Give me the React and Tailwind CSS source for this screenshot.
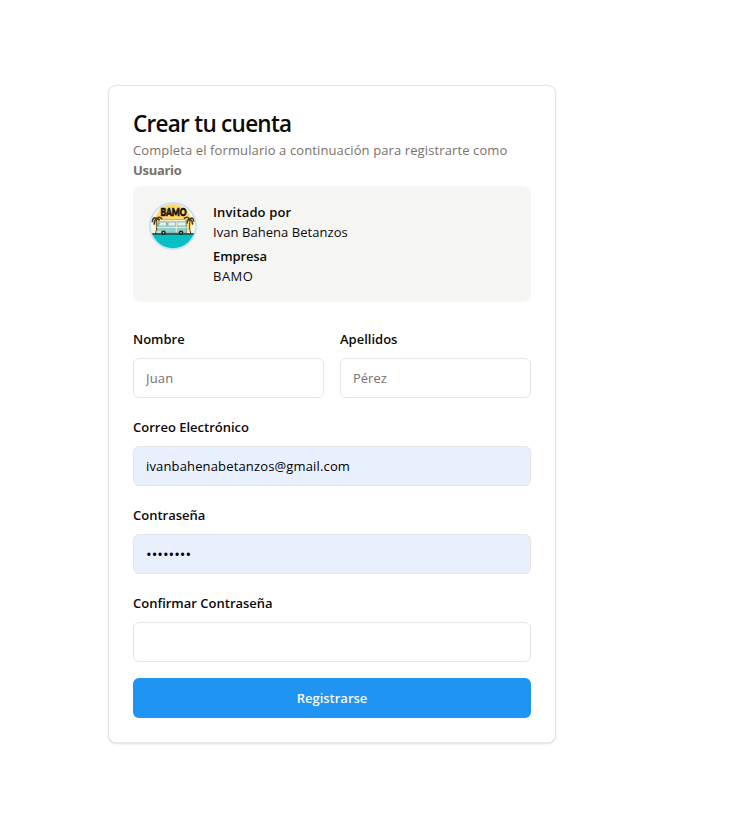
import React from 'react';

function Avatar() {
  return (
    <svg viewBox="0 0 48 48" className="size-12 shrink-0" role="img" aria-label="BAMO">
      <defs>
        <clipPath id="disc">
          <circle cx="24" cy="24" r="22.2" />
        </clipPath>
      </defs>
      <circle cx="24" cy="24" r="24" fill="#c5e2fb" />
      <g clipPath="url(#disc)">
        <rect width="48" height="48" fill="#fdf6e0" />
        <circle cx="24" cy="20" r="18" fill="#ffd970" />
        <rect y="32" width="48" height="16" fill="#06c0c6" />
        <rect y="31.2" width="48" height="1.4" fill="#24291f" />
        <path d="M6.500 32C8 27 8 22 7.500 17.500M42 32C40 27 40.500 22 41 17.500" fill="none" stroke="#4a3519" strokeWidth="1" />
        <g fill="none" stroke="#4e3d1c" strokeWidth="1.7" strokeLinecap="round">
          <path d="M7.500 16.500C5.500 15 3.500 16.500 3.200 19.500M8 16.500C10 14.500 12.500 15.500 13 17.500M8 17C10.500 17 11 18.500 11 20.500M7.500 17C5.500 18 5.200 20 5.200 22" />
          <path d="M41 17C43 15 44.500 16.500 45 19M40.500 17C38.500 14.500 36.500 15 35.500 16.500M40.500 17.500C38.500 17.500 38 19.500 38 21M41 17.500C43 18 43.500 20 43.500 22" />
        </g>
        <path d="M8 31V24.500L10.300 19Q11 17.500 12.500 17.500H34.500Q37.300 17.500 37.500 20.500V31Z" fill="#8fcfca" stroke="#6a8077" strokeWidth=".5" />
        <path d="M11 17.800H35Q36.500 18 37 19.500H10.300Z" fill="#f6ecd4" />
        <path d="M11 20H17.500V24H9.300ZM19 20H26.500V24H19ZM28 20H36.800V24H28Z" fill="#dff1f0" stroke="#6d8882" strokeWidth=".5" />
        <path d="M8 24.800H37.500V26H8Z" fill="#f3e8c9" />
        <path d="M27.300 20V30.500" stroke="#f3e8c9" strokeWidth="1" />
        <path d="M7.500 29.300H12V30.800H7.500Z" fill="#f3e8c9" />
        <circle cx="14.500" cy="30.700" r="2.300" fill="#22251f" />
        <circle cx="32" cy="30.700" r="2.300" fill="#22251f" />
        <circle cx="14.500" cy="30.700" r=".8" fill="#ddd" />
        <circle cx="32" cy="30.700" r=".8" fill="#ddd" />
      </g>
      <text
        x="24.500"
        y="14"
        textAnchor="middle"
        textLength="26"
        lengthAdjust="spacingAndGlyphs"
        className="fill-[#16130b] stroke-[#16130b] font-['Lato',sans-serif] text-[10.5px] font-black [stroke-width:0.7]"
      >
        BAMO
      </text>
    </svg>
  );
}

function Field({ label, id, filled = false, inputClass = 'text-[13px]', ...props }) {
  return (
    <div className="min-w-0">
      <label htmlFor={id} className="mb-2 block h-6 text-[13px] leading-[26px] font-semibold">
        {label}
      </label>
      <input
        id={id}
        className={`block h-10 w-full rounded-md border border-[#e5e5e5] px-3 text-black outline-none placeholder:text-[#78716c] ${filled ? 'bg-[#e8f0fe]' : 'bg-white'} ${inputClass}`}
        {...props}
      />
    </div>
  );
}

export default function App() {
  return (
    <main className="h-[826px] w-full overflow-hidden bg-white pt-[85px] pl-[108px] font-['Open_Sans','Noto_Sans',sans-serif] text-[#0c0a09]">
      <section className="h-[658px] w-[448px] rounded-lg border border-[#e5e5e5] bg-white p-6 shadow-sm">
        <header>
          <h1 className="text-[22.5px] leading-7 font-semibold tracking-[-0.72px] whitespace-nowrap">Crear tu cuenta</h1>
          <p className="mt-0.5 text-[13px] leading-5 tracking-[0.11px] whitespace-nowrap text-[#78716c]">
            Completa el formulario a continuación para registrarte como
            <br />
            <strong className="font-bold tracking-[-0.3px]">Usuario</strong>
          </p>
          <div className="mt-1.5 flex gap-4 rounded-lg bg-[#f5f5f4] p-4">
            <Avatar />
            <div className="text-[13px] leading-5 whitespace-nowrap">
              <p className="font-semibold tracking-[0.15px]">Invitado por</p>
              <p className="tracking-[0.05px]">Ivan Bahena Betanzos</p>
              <p className="mt-1 font-semibold tracking-[-0.1px]">Empresa</p>
              <p className="tracking-[0.5px]">BAMO</p>
            </div>
          </div>
        </header>
        <form className="mt-6 flex flex-col gap-4">
          <div className="grid grid-cols-2 gap-4">
            <Field label="Nombre" id="nombre" placeholder="Juan" inputClass="text-[13px] tracking-[0.2px]" />
            <Field label="Apellidos" id="apellidos" placeholder="Pérez" />
          </div>
          <Field
            label="Correo Electrónico"
            id="correo"
            filled
            defaultValue="ivanbahenabetanzos@gmail.com"
            inputClass="text-[13px] tracking-[0.15px]"
          />
          <Field label="Contraseña" id="clave" filled type="password" defaultValue="12345678" inputClass="text-[15px]" />
          <Field label="Confirmar Contraseña" id="confirmar" type="password" />
          <button type="button" className="h-10 rounded-md bg-[#2094f3] pt-0.5 text-[13px] font-semibold text-[#fafaf9]">
            Registrarse
          </button>
        </form>
      </section>
    </main>
  );
}
